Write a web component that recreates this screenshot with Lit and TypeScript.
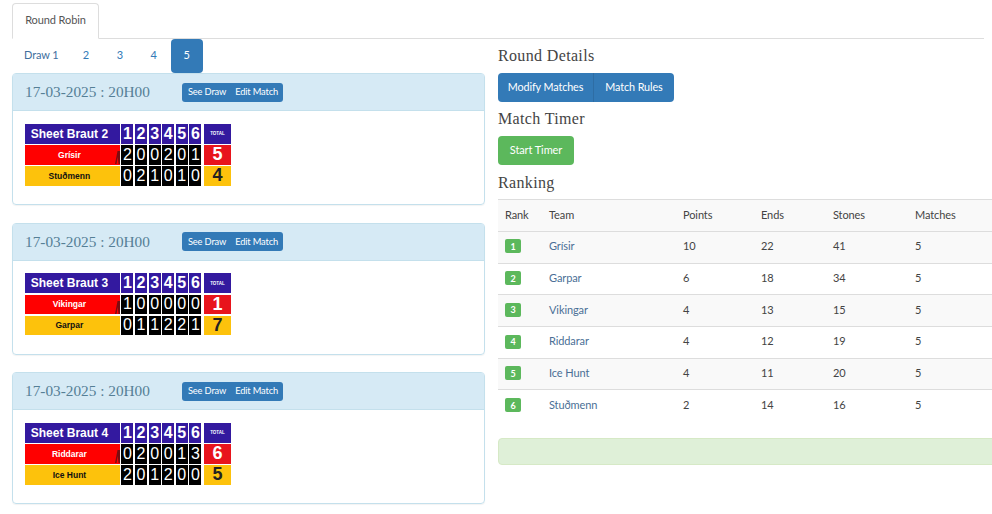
import { LitElement, html, css } from "lit";
import { customElement } from "lit/decorators.js";

const matches = [
  { sheet: "Sheet Braut 2", a: "Grísir", b: "Stuðmenn", as: [2,0,0,2,0,1], bs: [0,2,1,0,1,0], at: 5, bt: 4 },
  { sheet: "Sheet Braut 3", a: "Vikingar", b: "Garpar", as: [1,0,0,0,0,0], bs: [0,1,1,2,2,1], at: 1, bt: 7 },
  { sheet: "Sheet Braut 4", a: "Riddarar", b: "Ice Hunt", as: [0,2,0,0,1,3], bs: [2,0,1,2,0,0], at: 6, bt: 5 },
];
const ranks = [
  ["Grísir", 10, 22, 41, 5],
  ["Garpar", 6, 18, 34, 5],
  ["Vikingar", 4, 13, 15, 5],
  ["Riddarar", 4, 12, 19, 5],
  ["Ice Hunt", 4, 11, 20, 5],
  ["Stuðmenn", 2, 14, 16, 5],
];

@customElement("app-root")
export class AppRoot extends LitElement {
  static styles = css`
    :host { display: block; width: 992px; height: 514px; overflow: hidden; background: #fff; color: #444; font-family: Lato, "Open Sans", sans-serif; font-size: 11px; letter-spacing: -0.1px; }
    .tabs { margin: 3px 8px 0 12px; height: 36px; box-sizing: border-box; border-bottom: 1px solid #ddd; }
    .tab { width: 87px; height: 36px; box-sizing: border-box; border: 1px solid #ddd; border-bottom-color: #fff; border-radius: 4px 4px 0 0; padding-bottom: 4px; display: flex; align-items: center; justify-content: center; color: #555; background: #fff; }
    .cols { display: flex; align-items: flex-start; padding-left: 12px; }
    .left { width: 473px; flex: none; }
    .right { margin-left: 13px; width: 520px; flex: none; padding-top: 7px; }
    .pills { display: flex; height: 34px; }
    .pill { height: 34px; width: 33.9px; box-sizing: border-box; padding-bottom: 3px; display: flex; align-items: center; justify-content: center; color: #337ab7; border-radius: 4px; }
    .pill.first { width: 57px; justify-content: flex-start; padding-left: 12px; color: #3f6f9e; }
    .pill.on { background: #337ab7; color: #fff; width: 32px; }
    .panel { height: 132px; box-sizing: border-box; border: 1px solid #c4e0ec; border-radius: 4px; margin-bottom: 17.5px; box-shadow: 0 1px 1px rgba(0,0,0,.05); }
    .head { height: 37px; box-sizing: border-box; background: #d6eaf5; border-bottom: 1px solid #c4e0ec; display: flex; align-items: center; padding-left: 12px; }
    .date { width: 157px; font-family: "Liberation Serif", serif; font-size: 15.3px; letter-spacing: 0; color: #557f96; }
    .sm { display: flex; height: 19px; box-sizing: border-box; padding: 0 5px 1px 6px; background: #337ab7; border-radius: 3px; color: #fff; font-size: 9.3px; align-items: center; gap: 9px; letter-spacing: -0.15px; }
    .board { margin: 12.5px 0 0 12px; display: grid; grid-template-columns: 94.8px repeat(6, 12px) 28px; grid-template-rows: 20px 19.5px 19.5px; gap: 1.5px 1.6px; font-family: "Liberation Sans", sans-serif; font-weight: 700; letter-spacing: 0; }
    .board > div { display: flex; align-items: center; justify-content: center; }
    .t { background: #33199f; color: #fff; font-size: 12px; padding-right: 6px; }
    .n { background: #33199f; color: #fff; font-size: 16px; }
    .tot { background: #33199f; color: #fff; font-size: 4.5px; margin-left: 1px; }
    .ra { background: #f00; color: #fff; font-size: 8.5px; position: relative; padding-right: 6px; }
    .ya { background: #fdc20c; color: #111; font-size: 8.5px; padding-right: 6px; }
    .s { background: #000; color: #fff; font-size: 16px; font-weight: 400; }
    .rt { background: #e8141c; color: #fff; font-size: 18px; margin-left: 1px; }
    .yt { background: #fdc20c; color: #222; font-size: 18px; margin-left: 1px; }
    .hammer { position: absolute; right: 0; top: 5px; width: 6px; height: 14px; }
    h4 { margin: 0; font-family: "Liberation Serif", serif; font-weight: 400; font-size: 16px; letter-spacing: .35px; color: #444; line-height: 20px; }
    .btns { display: flex; margin: 7px 0 7px; width: 176px; height: 29px; background: #337ab7; border-radius: 4px; color: #fff; }
    .btns span { display: flex; align-items: center; justify-content: center; font-size: 10.8px; padding-bottom: 2px; box-sizing: border-box; }
    .btns span:first-child { width: 96px; border-right: 1px solid #2e6da4; }
    .btns span:last-child { flex: 1; }
    .green { display: flex; align-items: center; justify-content: center; box-sizing: border-box; padding-bottom: 2px; margin: 7px 0 8px; width: 76px; height: 29px; background: #5cb85c; border-radius: 4px; color: #fff; }
    table { margin-top: 6px; width: 520px; border-collapse: collapse; table-layout: fixed; }
    th, td { text-align: left; font-weight: 400; padding: 0 0 3px 7px; height: 31.7px; box-sizing: border-box; border-top: 1px solid #ddd; font-size: 11px; }
    th { border-bottom: 1px solid #ddd; height: 32px; }
    tr.odd td, thead tr { background: #f9f9f9; }
    a { color: #4a6f96; }
    .badge { display: inline-flex; width: 16px; height: 14px; align-items: center; justify-content: center; background: #5cb85c; border-radius: 2px; color: #fff; font-size: 9px; font-weight: 700; vertical-align: middle; }
    .alert { margin-top: 16px; width: 520px; height: 27px; box-sizing: border-box; background: #dff0d8; border: 1px solid #d6e9c6; border-radius: 4px; }
  `;

  board(m: typeof matches[number]) {
    return html`<div class="board">
      <div class="t">${m.sheet}</div>
      ${[1,2,3,4,5,6].map((n) => html`<div class="n">${n}</div>`)}
      <div class="tot">TOTAL</div>
      <div class="ra">${m.a}<svg class="hammer" viewBox="0 0 6 14"><path d="M1 14 L3.5 1 L6 1 L6 14 L4.5 14 L3.8 7 L2.5 14Z" fill="#7a0d10"/></svg></div>
      ${m.as.map((n) => html`<div class="s">${n}</div>`)}
      <div class="rt">${m.at}</div>
      <div class="ya">${m.b}</div>
      ${m.bs.map((n) => html`<div class="s">${n}</div>`)}
      <div class="yt">${m.bt}</div>
    </div>`;
  }

  render() {
    return html`
      <div class="tabs"><div class="tab">Round Robin</div></div>
      <div class="cols">
        <div class="left">
          <div class="pills">
            <div class="pill first">Draw 1</div>
            <div class="pill">2</div><div class="pill">3</div><div class="pill">4</div>
            <div class="pill on">5</div>
          </div>
          ${matches.map((m) => html`<div class="panel">
            <div class="head"><div class="date">17-03-2025 : 20H00</div><div class="sm"><span>See Draw</span><span>Edit Match</span></div></div>
            ${this.board(m)}
          </div>`)}
        </div>
        <div class="right">
          <h4>Round Details</h4>
          <div class="btns"><span>Modify Matches</span><span>Match Rules</span></div>
          <h4>Match Timer</h4>
          <div class="green">Start Timer</div>
          <h4>Ranking</h4>
          <table>
            <colgroup><col style="width:44px"/><col style="width:134px"/><col style="width:78px"/><col style="width:72px"/><col style="width:82px"/><col/></colgroup>
            <thead><tr><th>Rank</th><th>Team</th><th>Points</th><th>Ends</th><th>Stones</th><th>Matches</th></tr></thead>
            <tbody>
              ${ranks.map((r, i) => html`<tr class=${i % 2 ? "" : "odd"}>
                <td><span class="badge">${i + 1}</span></td>
                <td><a>${r[0]}</a></td><td>${r[1]}</td><td>${r[2]}</td><td>${r[3]}</td><td>${r[4]}</td>
              </tr>`)}
            </tbody>
          </table>
          <div class="alert"></div>
        </div>
      </div>
    `;
  }
}
